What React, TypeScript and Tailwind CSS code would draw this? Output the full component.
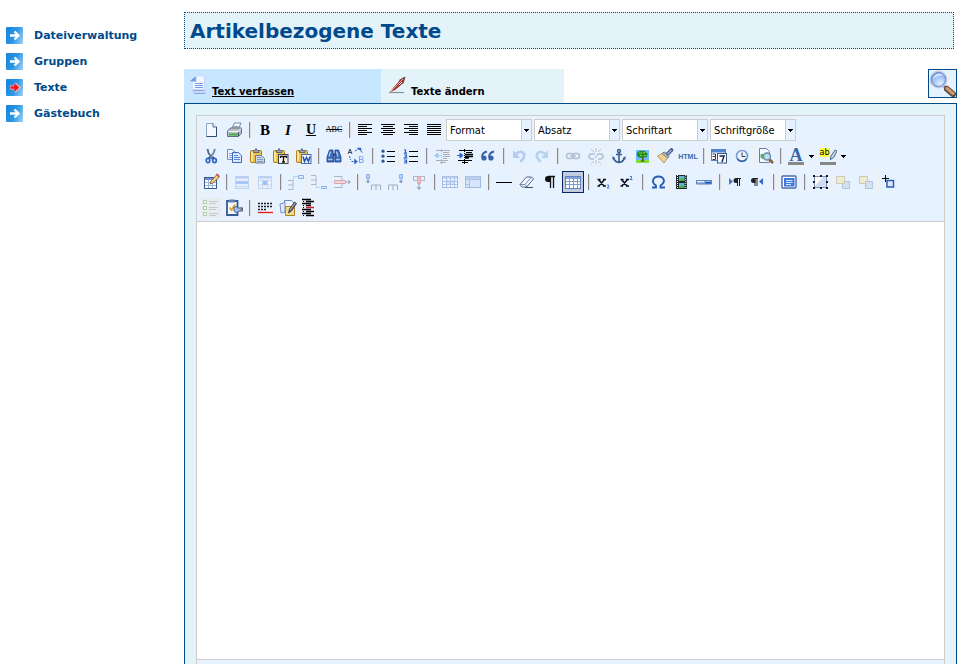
import React, { useState } from 'react';

const icons: Record<string, React.ReactNode> = {
  newdoc: (
    <>
      <path d="M5.500 3.500h6.500l3.500 3.500v9.500h-10z" fill="#f4f9ff" stroke="#8ea3c2" />
      <path d="M12 3.500v3.500h3.500" fill="#fff" stroke="#4a6690" />
      <path d="M15.500 7v9.500h-10" fill="none" stroke="#31486e" />
    </>
  ),
  print: (
    <>
      <path d="M7.500 9l3-6h6.500l-2.500 6z" fill="#f6f9ff" stroke="#7d8aa5" />
      <path d="M9.500 6.500h5M8.800 8h5" stroke="#8d9ab8" />
      <path d="M3.500 11l3-3h11v5l-3 3.500h-11z" fill="#b8bfcc" stroke="#626c80" />
      <path d="M4 11.500h10.500l2.500-3" fill="none" stroke="#f7f9fc" />
      <path d="M5 14.500h9" stroke="#3fb33f" strokeWidth="2" />
      <path d="M14.500 12v4" stroke="#4c5569" />
    </>
  ),
  left: <path d="M3 4.500h14M3 6.500h9M3 8.500h14M3 10.500h9M3 12.500h14M3 14.500h9" stroke="#000" />,
  center: <path d="M3 4.500h14M5 6.500h10M3 8.500h14M5 10.500h10M3 12.500h14M5 14.500h10" stroke="#000" />,
  right: <path d="M3 4.500h14M8 6.500h9M3 8.500h14M8 10.500h9M3 12.500h14M8 14.500h9" stroke="#000" />,
  full: <path d="M3 4.500h14M3 6.500h14M3 8.500h14M3 10.500h14M3 12.500h14M3 14.500h14" stroke="#000" />,
  cut: (
    <>
      <path d="M6.500 3l1 4 4 6" fill="none" stroke="#53657e" strokeWidth="1.800" />
      <path d="M14 3l-1.500 4-4 5.500" fill="none" stroke="#6f84a0" strokeWidth="1.800" />
      <path d="M9 11l-1.500 1.500M11.500 11l1.500 1.500" stroke="#2450a8" strokeWidth="2" />
      <ellipse cx="7" cy="14.500" rx="1.800" ry="2.200" fill="none" stroke="#2f66c4" strokeWidth="1.700" />
      <ellipse cx="13.500" cy="14.500" rx="1.800" ry="2.200" fill="none" stroke="#2f66c4" strokeWidth="1.700" />
    </>
  ),
  copy: (
    <>
      <path d="M3.500 3.500h5l3 3v7h-8z" fill="#eef5ff" stroke="#6b8dcc" />
      <path d="M5 7.500h4M5 9.500h4M5 11.500h3" stroke="#89aae0" />
      <path d="M8.500 6.500h6l3 3v7h-9z" fill="#dceaff" stroke="#3f68b8" />
      <path d="M10 9.500h4M10 11.500h6M10 13.500h6" stroke="#5d86d6" />
    </>
  ),
  paste: (
    <>
      <rect x="3.500" y="4.500" width="11" height="12" rx="1" fill="#f0c348" stroke="#b07f1c" />
      <path d="M5 6v9" stroke="#fbe69a" strokeWidth="2" />
      <path d="M6.500 6.500v-2h1.500l1-2 1 2h2v2z" fill="#9ba6b8" stroke="#5e687a" />
      <path d="M8.500 9.500h6l3 3v4.500h-9z" fill="#c9d6ea" stroke="#6c7c98" />
      <path d="M10 11.500h4M10 13.500h6M10 15.500h6" stroke="#8797b5" />
    </>
  ),
  pastetext: (
    <>
      <rect x="3.500" y="4.500" width="11" height="12" rx="1" fill="#f0c348" stroke="#b07f1c" />
      <path d="M5 6v9" stroke="#fbe69a" strokeWidth="2" />
      <path d="M6.500 6.500v-2h1.500l1-2 1 2h2v2z" fill="#9ba6b8" stroke="#5e687a" />
      <rect x="8.500" y="8.500" width="9.500" height="9" fill="#f2f2ee" stroke="#44464c" />
      <path d="M10.500 12v-1.500h6v1.500M13.500 10.500v5.500M12 16h3" fill="none" stroke="#111" strokeWidth="1.300" />
    </>
  ),
  pasteword: (
    <>
      <rect x="3.500" y="4.500" width="11" height="12" rx="1" fill="#f0c348" stroke="#b07f1c" />
      <path d="M5 6v9" stroke="#fbe69a" strokeWidth="2" />
      <path d="M6.500 6.500v-2h1.500l1-2 1 2h2v2z" fill="#9ba6b8" stroke="#5e687a" />
      <rect x="8.500" y="8.500" width="9.500" height="9" fill="#edf4ff" stroke="#4b6ba8" />
      <path d="M10 10.500l1.500 5 2-4 2 4 1.500-5" fill="none" stroke="#2456b8" strokeWidth="1.500" />
    </>
  ),
  search: (
    <>
      <path d="M5.500 4h3.500v3l1 1v8H3v-5zM11 4h3.500l2.500 7v5h-6V8z" fill="#3c69b8" stroke="#1e438a" strokeWidth="0.800" />
      <path d="M6.500 5.500l-1.500 5M12.500 5.500l1.500 5" stroke="#b9d2f5" strokeWidth="1.200" />
      <path d="M4 13.500h4.500M12 13.500h4" stroke="#9bbcf0" strokeWidth="1.500" />
      <path d="M9 8.500h3" stroke="#24498f" strokeWidth="2" />
    </>
  ),
  replace: (
    <>
      <path d="M1 8l2-5 2 5M2 6.500h2.500" fill="none" stroke="#3a4862" />
      <path d="M8 5l4-2M14 5l1.500 2M2.500 10l1 4M4.500 15.500h3" stroke="#2b62c8" strokeDasharray="2 1" />
      <path d="M10 2h4v3M7.500 13l3 2.500-3 2.500z" fill="#2b62c8" stroke="#2b62c8" strokeWidth="0.500" />
      <path d="M12.500 10.500v6h2.500q1.500-.3 1.500-1.600t-1.800-1.500q1.300-.2 1.300-1.500t-1.500-1.400zM12.500 13.500h2" fill="none" stroke="#7d9be8" />
    </>
  ),
  bullist: (
    <>
      <path d="M9 5.500h8M9 10.500h8M9 15.500h8" stroke="#000" />
      <circle cx="5" cy="5.200" r="1.600" fill="#33579c" />
      <circle cx="5" cy="10.200" r="1.600" fill="#33579c" />
      <circle cx="5" cy="15.200" r="1.600" fill="#33579c" />
    </>
  ),
  numlist: (
    <>
      <path d="M8 5.500h9M8 10.500h9M8 15.500h9" stroke="#000" />
      <path d="M3 4h1.500v3M3 7.200h3M3 9h2.500v1.300l-2 1.700h3M3 14h2.500v3h-2.500M3.500 15.500h2" fill="none" stroke="#2f61c0" strokeWidth="1.200" />
    </>
  ),
  outdent: (
    <>
      <path d="M4 4.500h14M11 6.500h6M11 8.500h7M11 10.500h7M11 12.500h4M4 14.500h12M8 16.500h6" stroke="#a7aeb8" />
      <path d="M9 9.500H3M6 7l-3.500 2.500 3.500 2.500z" fill="#a9c8f0" stroke="#a9c8f0" />
      <path d="M9.500 3v15" stroke="#b4bac4" strokeDasharray="1 1" />
    </>
  ),
  indent: (
    <>
      <path d="M4 4.500h14M11 6.500h6M3 14.500h14M7 16.500h6" stroke="#000" />
      <path d="M10 8.500h8M10 10.500h8M10 12h4" stroke="#000" strokeWidth="1.500" />
      <path d="M2 9.500h4M5 7l3 2.500-3 2.500z" fill="#2a62d0" stroke="#2a62d0" />
      <path d="M9.500 3v15" stroke="#000" strokeDasharray="1 1" />
    </>
  ),
  quote: (
    <>
      <path d="M9 5.500q-5 1-5 6" fill="none" stroke="#3b62a6" strokeWidth="1.800" />
      <circle cx="6" cy="12" r="2.600" fill="#3b62a6" />
      <path d="M16 5.500q-5 1-5 6" fill="none" stroke="#3b62a6" strokeWidth="1.800" />
      <circle cx="13" cy="12" r="2.600" fill="#3b62a6" />
    </>
  ),
  undo: (
    <>
      <path d="M7 8q3-3 6-2 3 1.500 2 5-1 3-4 4.500" fill="none" stroke="#b5cbf0" strokeWidth="2.600" />
      <path d="M4 4v8h7z" fill="#b5cbf0" />
    </>
  ),
  redo: (
    <>
      <path d="M13 8q-3-3-6-2-3 1.500-2 5 1 3 4 4.500" fill="none" stroke="#b7d4ee" strokeWidth="2.600" />
      <path d="M16 4v8H9z" fill="#b7d4ee" />
    </>
  ),
  link: (
    <>
      <rect x="3.500" y="7.500" width="7" height="5" rx="2.500" fill="none" stroke="#b4bfd0" strokeWidth="1.500" />
      <rect x="9.500" y="7.500" width="7" height="5" rx="2.500" fill="none" stroke="#b4bfd0" strokeWidth="1.500" />
      <path d="M7 10h6" stroke="#b4bfd0" strokeWidth="1.500" />
    </>
  ),
  unlink: (
    <>
      <path d="M8 13H5.500a2.500 2.500 0 010-5H9M12 13h2.500a2.500 2.500 0 000-5H12" fill="none" stroke="#b4bfd0" strokeWidth="1.700" />
      <path d="M10 2v4M5 3l3 3M15 3l-3 3M10 14v4M5 18l3-3M15 18l-3-3" stroke="#bbc3cf" />
      <path d="M9 12l3-4" stroke="#a4b4cf" />
    </>
  ),
  anchor: (
    <>
      <circle cx="10" cy="5" r="1.500" fill="none" stroke="#385b8e" strokeWidth="1.400" />
      <path d="M10 6v10M7 8.500h6M4.500 11.500q1 4.500 5.500 5 4.500-.5 5.500-5" fill="none" stroke="#385b8e" strokeWidth="1.600" />
      <path d="M3.500 13.500V10l3 2.500zM16.500 13.500V10l-3 2.500z" fill="#385b8e" />
    </>
  ),
  image: (
    <>
      <path d="M4 4h13v13H4z" fill="#6cb9ff" />
      <path d="M4 14h13v3H4z" fill="#7fe03c" />
      <path d="M10 10h1.500v4.500l2 1H8l2-1.500z" fill="#6b4220" />
      <path d="M5 9q-1-2 1-3 2-2 4-1 3-1 4 1.500 2.500 1 1 3.500 0 2-3 1.500-2 1.500-4 0Q5.500 12 5 9z" fill="#2c8a24" />
      <path d="M7 7h3M11 6.500h2M8 9.500h2M12 9.500h2" stroke="#70d145" />
    </>
  ),
  cleanup: (
    <>
      <path d="M12.500 8l4-4" stroke="#40527a" strokeWidth="3.600" strokeLinecap="round" />
      <path d="M12.500 8l4-4" stroke="#9cb8e8" strokeWidth="1.400" />
      <path d="M9.500 6l4.500 4.500-2 2-5-5z" fill="#aab5c4" stroke="#5e6e88" />
      <path d="M7 7.500l5 5-3 4.500-6.500-7z" fill="#f8e8b4" stroke="#b99344" />
      <path d="M4.500 10l5 5.500M6.500 9l4 5" stroke="#d4aa52" strokeWidth="0.800" />
    </>
  ),
  date: (
    <>
      <rect x="2.500" y="3.500" width="14" height="11" fill="#fff" stroke="#5b83c8" />
      <path d="M2 3h15v3.500H2z" fill="#5685d0" />
      <path d="M3.500 8h3v5.500h-3M3.500 10.500h3" fill="none" stroke="#2d3b55" />
      <rect x="8.500" y="7.500" width="9" height="9.500" fill="#f8fbff" stroke="#3d5788" />
      <path d="M10.500 10h4.500l-2 6" fill="none" stroke="#152340" strokeWidth="1.400" />
    </>
  ),
  time: (
    <>
      <circle cx="10" cy="10" r="5.500" fill="#eef5ff" stroke="#7898cf" strokeWidth="1.500" />
      <path d="M5.500 12.500a5 5 0 009 0" fill="none" stroke="#3862ae" strokeWidth="1.500" />
      <path d="M10 6.500v4h3.500" fill="none" stroke="#263c66" />
    </>
  ),
  preview: (
    <>
      <path d="M4.500 2.500h7l3 3v11h-10z" fill="#f4f8ff" stroke="#6c7e9c" />
      <path d="M5.500 8.500q3-2 4 1l-1 4-3-2z" fill="#5cae67" />
      <path d="M14 13l4 4" stroke="#8d6238" strokeWidth="2.600" />
      <circle cx="12" cy="10.500" r="3.500" fill="#b9def3" stroke="#6785a8" strokeWidth="1.300" />
    </>
  ),
  tableedit: (
    <>
      <rect x="3.500" y="5.500" width="12" height="11" fill="#fff" stroke="#39598f" />
      <path d="M4 7h11" stroke="#6c93d1" strokeWidth="2" />
      <path d="M4 10.500h11M4 13.500h11M7.500 8v8M11.500 8v8" stroke="#9db8de" />
      <path d="M9 12l1-3 6-6.500 2.500 2.500-6.500 6z" fill="#f1cf7e" stroke="#7a4f29" strokeWidth="0.800" />
      <path d="M15.500 2l2.500 2.500" stroke="#d8584a" strokeWidth="1.800" />
    </>
  ),
  rowprops: (
    <>
      <rect x="3.500" y="4.500" width="13" height="12" fill="#e4efff" stroke="#c3d3ec" />
      <path d="M4 5.500h12" stroke="#b5cdf4" strokeWidth="2" />
      <path d="M4 9h12v3H4z" fill="#a9c8f8" />
      <path d="M4 14.500h12" stroke="#c9d9f0" />
    </>
  ),
  cellprops: (
    <>
      <rect x="3.500" y="4.500" width="13" height="12" fill="#eef4fd" stroke="#c3d3ec" />
      <path d="M4 5.500h12" stroke="#b5cff6" strokeWidth="2" />
      <path d="M4 13h12M7.500 7v9M12.500 7v9M4 8.500h12" stroke="#c8d8ef" />
      <path d="M8 9h4v4H8z" fill="#97bff9" />
    </>
  ),
  rowbefore: (
    <>
      <path d="M2 8.500h5v9H2M2 13h5" fill="none" stroke="#b2b7be" />
      <path d="M7.500 7.500v-3h4" fill="none" stroke="#9badc9" strokeDasharray="1 1" />
      <path d="M12.500 3.500h5v3h-5z" fill="#dceaff" stroke="#8eb0e4" />
    </>
  ),
  rowafter: (
    <>
      <path d="M2 3.500h5v9H2M2 8h5" fill="none" stroke="#b2b7be" />
      <path d="M7.500 13.500v2h4" fill="none" stroke="#9badc9" strokeDasharray="1 1" />
      <path d="M12.500 14.500h5v2h-5z" fill="#dceaff" stroke="#8eb0e4" />
    </>
  ),
  rowdelete: (
    <>
      <path d="M2 4.500h8v11H2" fill="none" stroke="#b2b7be" />
      <path d="M2.500 8.500h11v3h-11z" fill="#f3d3d8" stroke="#d7a8b0" />
      <path d="M14 10h4M16 8l2.500 2-2.500 2" fill="none" stroke="#9ca6b4" />
    </>
  ),
  colbefore: (
    <>
      <path d="M3.500 2.500h3v4h-3z" fill="#b9d3fb" stroke="#8eb0e4" />
      <path d="M5 7v3M3.500 9l1.500 2 1.500-2z" fill="#8d9fb9" stroke="#8d9fb9" />
      <path d="M8.500 18v-5h9v5M13 13v5" fill="none" stroke="#a8adb5" />
    </>
  ),
  colafter: (
    <>
      <path d="M13.500 2.500h3v4h-3z" fill="#b9d3fb" stroke="#8eb0e4" />
      <path d="M15 7v3M13.500 9l1.500 2 1.500-2z" fill="#8d9fb9" stroke="#8d9fb9" />
      <path d="M2.500 18v-5h9v5M7 13v5" fill="none" stroke="#a8adb5" />
    </>
  ),
  coldelete: (
    <>
      <path d="M4.500 4v4.500h4M15.500 4v4.500h-4M4 4.500h12" fill="none" stroke="#b2b7be" />
      <path d="M8.500 4.500h3v7h-3z" fill="#f3bcc3" stroke="#d7a8b0" />
      <path d="M10 12v5M8 15l2 2.500 2-2.500" fill="none" stroke="#8d95a2" />
    </>
  ),
  split: (
    <>
      <rect x="2.500" y="4.500" width="15" height="11" fill="#f1f6fe" stroke="#a3bbe0" />
      <path d="M3 5.500h14" stroke="#b8cdee" strokeWidth="2" />
      <path d="M3 9.500h14M3 12.500h14M6.500 5v10M10.500 5v10M14.500 5v10" stroke="#a9c2e8" />
      <path d="M7 8h7v5H7z" fill="#a9c8f4" opacity=".5" />
    </>
  ),
  merge: (
    <>
      <rect x="2.500" y="4.500" width="15" height="11" fill="#d6e5fb" stroke="#a3bbe0" />
      <path d="M3 5.500h14" stroke="#b8cdee" strokeWidth="2" />
      <path d="M3 7.500h14M6.500 5v10M10.500 5v2M14.500 5v2M3 12.500h3" stroke="#a9c2e8" />
    </>
  ),
  hr: <path d="M2 10.500h16" stroke="#000" />,
  eraser: (
    <>
      <path d="M3 12.500l6.500-7.500h5l2 2-7 8H5z" fill="#f6f9ff" stroke="#52678f" />
      <path d="M3 12.500h5l6.500-7.500M8 12.500l2 2.500" fill="none" stroke="#7188b0" />
      <path d="M8 15.500h8" stroke="#3d4d68" />
    </>
  ),
  pilcrow: (
    <>
      <path d="M10.500 4v12M13.500 4v12M8 4.500h7" stroke="#111" strokeWidth="1.300" />
      <path d="M11 4H8a3 3 0 000 6h3z" fill="#111" />
    </>
  ),
  guides: (
    <>
      <rect x="2.500" y="4.500" width="15" height="12" fill="#fff" stroke="#6083bd" />
      <path d="M3 6h14" stroke="#86a5dc" strokeWidth="2" />
      <path d="M3 9.500h14M3 12.500h14M6.500 5v11M10.500 5v11M14.500 5v11" stroke="#7d9ccc" />
    </>
  ),
  sub: (
    <>
      <path d="M4.500 7.500l6 7M10.500 7.500l-6 7M3.500 7.500h3M9 7.500h3M3.500 14h2.500M9 14h3" stroke="#111" strokeWidth="1.600" />
      <path d="M13 13h1.500v1.500l-1.500 1.500h2.500" fill="none" stroke="#3978d0" />
    </>
  ),
  sup: (
    <>
      <path d="M4.500 7.500l6 7M10.500 7.500l-6 7M3.500 7.500h3M9 7.500h3M3.500 14h2.500M9 14h3" stroke="#111" strokeWidth="1.600" />
      <path d="M13 4.500h1.500v1.500l-1.500 1.500h2.500" fill="none" stroke="#3978d0" />
    </>
  ),
  omega: (
    <path d="M4 15.500h4v-2q-3.500-2-3-5 .8-4 5.500-4t5.500 4q0 3-3.500 5v2H17" fill="none" stroke="#2859b4" strokeWidth="1.800" />
  ),
  media: (
    <>
      <path d="M5 3h11v14H5z" fill="#222a2c" />
      <path d="M8 4h5.500v5H8zM8 11h5.500v5H8z" fill="#5fb6c4" />
      <path d="M8 9l3-3 2.500 3zM8 16l3-3 2.500 3z" fill="#4cad38" />
      <path d="M6.500 3v14M14.800 3v14" stroke="#fff" strokeDasharray="1 1" />
    </>
  ),
  advhr: (
    <>
      <path d="M2.500 8.500h15v3.500h-15z" fill="#8fb4ed" stroke="#5d7fb8" />
      <path d="M3 9.500h7" stroke="#eff6ff" />
      <path d="M11 10h6v1.500h-6z" fill="#1c55bb" />
    </>
  ),
  ltr: (
    <>
      <path d="M4 6v7l4-3.500z" fill="#4d75b8" />
      <path d="M12.500 6v8M14.500 6v8M11 6.500h5" stroke="#222" />
      <path d="M13 6h-2a2.300 2.300 0 000 5h2z" fill="#222" />
    </>
  ),
  rtl: (
    <>
      <path d="M15 6v7l-4-3.500z" fill="#3267c8" />
      <path d="M7 6v8M9 6v8M5 6.500h5" stroke="#222" />
      <path d="M7.500 6h-2a2.300 2.300 0 000 5h2z" fill="#222" />
    </>
  ),
  fullscreen: (
    <>
      <rect x="3" y="4" width="14" height="12" rx="1" fill="#fff" stroke="#4a6cab" strokeWidth="1.400" />
      <path d="M5 6h10.500v8.500H5z" fill="#3e78dc" />
      <path d="M7 8.500h6.500M7 10.500h6.500M7 12.500h5" stroke="#dbe9ff" />
    </>
  ),
  layer: (
    <>
      <rect x="4.500" y="4.500" width="12" height="11" fill="#cfdcf1" stroke="#7e8da8" />
      <path d="M5 5h8l-8 9z" fill="#fff" />
      <path d="M3 3h2v2H3zM10 3h2v2h-2zM16 3h2v2h-2zM3 9h2v2H3zM16 9h2v2h-2zM3 15h2v2H3zM10 15h2v2h-2zM16 15h2v2h-2z" fill="#111827" />
    </>
  ),
  forward: (
    <>
      <path d="M9.500 9.500h7v7h-7z" fill="#d4e1ee" stroke="#b6c5d5" />
      <path d="M3.500 4.500h8v7h-8z" fill="#f0eccb" stroke="#c9ccb4" />
    </>
  ),
  backward: (
    <>
      <path d="M3.500 4.500h8v7h-8z" fill="#f0eccb" stroke="#c9ccb4" />
      <path d="M9.500 9.500h7v7h-7z" fill="#d4e1ee" stroke="#b6c5d5" />
    </>
  ),
  absolute: (
    <>
      <path d="M6.500 3v7M3 6.500h7" stroke="#111" />
      <path d="M8 8.500h6.500V15H8z" fill="#dbe8fd" stroke="#2d5cba" strokeWidth="1.500" />
    </>
  ),
  styleprops: (
    <>
      <path d="M0 0h20v20H0z" fill="#e6edf0" />
      <path d="M2.500 2.500h3v3h-3zM2.500 8.500h3v3h-3zM2.500 14.500h3v3h-3z" fill="#f5faf3" stroke="#a9c8ae" />
      <path d="M8 3.500h9M8 5.500h7M8 9.500h9M8 11.500h7M8 15.500h9M8 17.500h7" stroke="#c3c9cd" />
    </>
  ),
  attribs: (
    <>
      <path d="M3 3h10.500v14H3z" fill="#f7fbff" stroke="#385b91" strokeWidth="1.800" />
      <path d="M5 1.500h6v3H5z" fill="#5b7fb4" />
      <path d="M5.500 9.500l2 2.500 3.500-5.500" fill="none" stroke="#dfa02d" strokeWidth="1.800" />
      <path d="M10 9.500l3.500-1.500v2h5v3h-4l-2 2-2.500-2z" fill="#a9c4e8" stroke="#395a91" />
      <path d="M17.500 9v4" stroke="#a56a35" strokeWidth="1.600" />
    </>
  ),
  pagebreak: (
    <>
      <path d="M3 5.500h15M3 8.500h15M3 11.500h8" stroke="#222" strokeWidth="1.600" strokeDasharray="2 1" />
      <path d="M3 14.500h15" stroke="#f01414" strokeWidth="1.300" />
    </>
  ),
  template: (
    <>
      <path d="M6.500 2.500h7l2 2v9h-9z" fill="#eef4ff" stroke="#6a89c4" />
      <path d="M2 6l5-1.500v9.500l-4 1z" fill="#dfe9fb" stroke="#7591c5" />
      <path d="M7.500 8.500h9v9h-9z" fill="#f3dc8e" stroke="#ab7d29" />
      <path d="M10.500 15l1-4 5-7 2 1.500-5 7.500z" fill="#5a5f6b" stroke="#2a2e38" strokeWidth="0.700" />
      <path d="M12 12l5-7" stroke="#d7dde8" strokeWidth="0.700" />
    </>
  ),
  linespace: (
    <>
      <path d="M1 1.500h9M5 3.500h8M1 5.500h9M5 7.500h5M1 11.500h9M5 13.500h8M1 15.500h9M5 17.500h8" stroke="#000" strokeWidth="1.400" />
      <path d="M5 9.500h8" stroke="#d81e2c" strokeWidth="1.600" />
      <path d="M2.500 1v18" stroke="#000" strokeDasharray="1 1" />
    </>
  ),
};

const glyphs: Record<string, React.ReactNode> = {
  bold: <span className="font-['Liberation_Serif',serif] text-[15px] font-bold">B</span>,
  italic: <span className="font-['Liberation_Serif',serif] text-[15px] font-bold italic">I</span>,
  underline: <span className="font-['Liberation_Serif',serif] text-[14px] font-bold underline">U</span>,
  strike: <span className="font-['Liberation_Serif',serif] text-[8px] font-normal line-through">ABC</span>,
  html: <span className="font-['Liberation_Sans',sans-serif] text-[7px] font-bold text-[#3f68ae]">HTML</span>,
  forecolor: (
    <span className="flex flex-col items-center">
      <span className="h-[14px] font-['Liberation_Serif',serif] text-[18px] font-bold leading-[15px] text-[#3d62a5]">A</span>
      <span className="h-[3px] w-4 bg-[#888]" />
    </span>
  ),
  backcolor: (
    <span className="flex flex-col items-center">
      <span className="flex h-[14px] items-start">
        <span className="h-[9px] bg-[#ffff3c] font-['DejaVu_Sans_Condensed','DejaVu_Sans',sans-serif] text-[9px] font-normal leading-[8px]">ab</span>
        <svg width="7" height="14" viewBox="0 0 7 14">
          <path d="M0 12l1-4 4-6 2 1-3 6z" fill="#c3d5ee" stroke="#536988" />
        </svg>
      </span>
      <span className="h-[3px] w-4 bg-[#888]" />
    </span>
  ),
};

// "|" marks a separator, "icon!" a disabled button
const rows: [string, string][][] = [
  [
    ['newdoc', 'Neues Dokument'], ['print', 'Drucken'], ['|', ''],
    ['bold', 'Fett'], ['italic', 'Kursiv'], ['underline', 'Unterstrichen'], ['strike', 'Durchgestrichen'], ['|', ''],
    ['left', 'Linksbündig'], ['center', 'Zentriert'], ['right', 'Rechtsbündig'], ['full', 'Blocksatz'],
  ],
  [
    ['cut', 'Ausschneiden'], ['copy', 'Kopieren'], ['paste', 'Einfügen'], ['pastetext', 'Als Text einfügen'], ['pasteword', 'Aus Word einfügen'], ['|', ''],
    ['search', 'Suchen'], ['replace', 'Ersetzen'], ['|', ''],
    ['bullist', 'Aufzählung'], ['numlist', 'Nummerierung'], ['|', ''],
    ['outdent!', 'Ausrücken'], ['indent', 'Einrücken'], ['quote', 'Zitat'], ['|', ''],
    ['undo!', 'Rückgängig'], ['redo!', 'Wiederholen'], ['|', ''],
    ['link!', 'Link einfügen'], ['unlink!', 'Link entfernen'], ['anchor', 'Anker'], ['image', 'Bild'], ['cleanup', 'Code aufräumen'], ['html', 'HTML bearbeiten'], ['|', ''],
    ['date', 'Datum'], ['time', 'Uhrzeit'], ['preview', 'Vorschau'], ['|', ''],
    ['forecolor', 'Textfarbe'], ['backcolor', 'Hintergrundfarbe'],
  ],
  [
    ['tableedit', 'Tabelle'], ['|', ''],
    ['rowprops!', 'Zeileneigenschaften'], ['cellprops!', 'Zelleneigenschaften'], ['|', ''],
    ['rowbefore!', 'Zeile davor'], ['rowafter!', 'Zeile danach'], ['rowdelete!', 'Zeile löschen'], ['|', ''],
    ['colbefore!', 'Spalte davor'], ['colafter!', 'Spalte danach'], ['coldelete!', 'Spalte löschen'], ['|', ''],
    ['split!', 'Zellen trennen'], ['merge!', 'Zellen verbinden'], ['|', ''],
    ['hr', 'Trennlinie'], ['eraser', 'Formatierung entfernen'], ['pilcrow', 'Steuerzeichen'], ['guides', 'Hilfslinien'], ['|', ''],
    ['sub', 'Tiefgestellt'], ['sup', 'Hochgestellt'], ['|', ''],
    ['omega', 'Sonderzeichen'], ['media', 'Medien'], ['advhr', 'Horizontale Linie'], ['|', ''],
    ['ltr', 'Links nach rechts'], ['rtl', 'Rechts nach links'], ['|', ''],
    ['fullscreen', 'Vollbild'], ['|', ''],
    ['layer', 'Ebene einfügen'], ['forward!', 'Nach vorne'], ['backward!', 'Nach hinten'], ['absolute', 'Absolute Position'],
  ],
  [
    ['styleprops!', 'CSS bearbeiten'], ['attribs', 'Attribute'], ['|', ''],
    ['pagebreak', 'Seitenumbruch'], ['template', 'Vorlage'], ['linespace', 'Zeilenabstand'],
  ],
];

const menu = ['Dateiverwaltung', 'Gruppen', 'Texte', 'Gästebuch'];
const selects = ['Format', 'Absatz', 'Schriftart', 'Schriftgröße'];

const ToolButton = ({ id, label, pressed, onClick }: { id: string; label: string; pressed: boolean; onClick?: () => void }) => {
  const name = id.replace('!', '');
  return (
    <button
      type="button"
      aria-label={label}
      disabled={id.endsWith('!')}
      onClick={onClick}
      className={`flex size-[22px] shrink-0 items-center justify-center border leading-none text-black ${
        pressed ? 'border-[#0a246a] bg-[#c2cbe0]' : 'border-[#edf0f4]'
      }`}
    >
      {glyphs[name] || (
        <svg width="20" height="20" viewBox="0 0 20 20" className="shrink-0">
          {icons[name]}
        </svg>
      )}
    </button>
  );
};

const Arrow = () => (
  <svg width="5" height="3" viewBox="0 0 5 3" shapeRendering="crispEdges">
    <path d="M0 0h5v1H0zM1 1h3v1H1zM2 2h1v1H2z" fill="#000" />
  </svg>
);

const NavIcon = ({ active }: { active: boolean }) => (
  <svg width="17" height="17" viewBox="0 0 17 17" className="shrink-0">
    <defs>
      <linearGradient id="nav" x1="0" y1="0.300" x2="1" y2="0.700">
        <stop offset="0" stopColor="#1787dc" />
        <stop offset="0.550" stopColor="#2f97e4" />
        <stop offset="1" stopColor="#8fc9f3" />
      </linearGradient>
    </defs>
    <rect width="17" height="17" rx="1" fill="url(#nav)" />
    {active && <path d="M4 8.500h8M8.500 5l3.500 3.500-3.500 3.500" fill="none" stroke="#f3b9c8" strokeWidth="4" />}
    <path
      d={active ? 'M4.500 8.500h7M8.500 5.500l3 3-3 3' : 'M4 8.500h8M8.500 4.500l4 4-4 4'}
      fill="none"
      stroke={active ? '#f01818' : '#fff'}
      strokeWidth="2.400"
    />
  </svg>
);

const App: React.FC = () => {
  const [tab, setTab] = useState('verfassen');
  const [guides, setGuides] = useState(true);
  const [text, setText] = useState('');

  return (
    <div className="flex min-h-screen bg-white font-['DejaVu_Sans',Verdana,sans-serif] text-[11px] font-bold">
      <nav className="w-[184px] shrink-0 pl-[6px] pt-[27px]">
        <ul className="flex flex-col gap-[9px]">
          {menu.map((item) => (
            <li key={item}>
              <a href="#" className="flex h-[17px] items-center gap-[11px] text-[#004a8c]">
                <NavIcon active={item === 'Texte'} />
                <span className="pt-[2px]">{item}</span>
              </a>
            </li>
          ))}
        </ul>
      </nav>

      <main className="flex min-w-0 flex-1 flex-col pr-1 pt-3">
        <h1 className="mr-[3px] border border-dotted border-[#004a8c] bg-[#e4f3fa] px-[5px] pt-[2px] text-[20px] leading-[33px] text-[#004a8c]">
          Artikelbezogene Texte
        </h1>

        <div className="mt-5 flex items-start text-[10px]">
          <a
            href="#verfassen"
            onClick={() => setTab('verfassen')}
            className={`flex h-[34px] w-[197px] items-end gap-1 bg-[#c7e6ff] pb-[3px] pl-[6px] leading-4 text-black ${tab === 'verfassen' ? 'underline' : ''}`}
          >
            <svg width="18" height="20" viewBox="0 0 18 20" className="mb-[5px]">
              <path d="M5 1h10v16H3V8z" fill="#f1f6ff" />
              <path d="M0 6l6-5v6H3z" fill="#6f97ea" />
              <path d="M1 6.500h5V1.500" fill="none" stroke="#a9c3f6" />
              <path d="M7 1.500h8" stroke="#dfe9fd" />
              <path d="M14.500 1v14" stroke="#c5d4f7" />
              <path d="M5 8.500h8M5 10.500h8M5 12.500h8" stroke="#7a98e6" />
              <path d="M2 14h14v3q0 2-2 2H3z" fill="#c9d7f8" />
              <path d="M3 15.500h11M4 18.500h11" stroke="#8aa4e8" />
            </svg>
            Text verfassen
          </a>
          <a
            href="#aendern"
            onClick={() => setTab('aendern')}
            className={`flex h-[34px] w-[183px] items-end gap-1 bg-[#e4f3fa] pb-[3px] pl-2 leading-4 text-black ${tab === 'aendern' ? 'underline' : ''}`}
          >
            <svg width="18" height="20" viewBox="0 0 18 20" className="mb-[5px]">
              <path d="M0 17.500h15" stroke="#8b8f96" strokeWidth="1.200" />
              <path d="M1 17l3-4 7-8 5-3-1 5-4 4-5 4z" fill="#a8352d" />
              <path d="M2 16l5-5 7-7" stroke="#e4a99c" />
              <path d="M10 5.500l6-3.500-2.500 7" fill="none" stroke="#6b4a42" />
              <path d="M10 10l3-3" stroke="#fff" />
            </svg>
            Texte ändern
          </a>
          <button type="button" aria-label="Suche" className="ml-auto flex size-[29px] items-center justify-center border border-[#004a8c] bg-[#e6f2ff]">
            <svg width="27" height="27" viewBox="0 0 27 27">
              <defs>
                <radialGradient id="lens" cx="0.600" cy="0.750" r="0.800">
                  <stop offset="0" stopColor="#e3f1ff" />
                  <stop offset="0.500" stopColor="#a5c5fa" />
                  <stop offset="1" stopColor="#6d94e8" />
                </radialGradient>
              </defs>
              <path d="M14 15l3 3" stroke="#777d8b" strokeWidth="3" />
              <path d="M18 19l6 5" stroke="#5e4334" strokeWidth="6" strokeLinecap="round" />
              <path d="M18 18.500l6 5" stroke="#c39a77" strokeWidth="3.500" strokeLinecap="round" />
              <circle cx="9.500" cy="9.500" r="8" fill="url(#lens)" stroke="#c2cbe0" strokeWidth="2" />
              <circle cx="9.500" cy="9.500" r="7" fill="none" stroke="#6484cf" />
              <path d="M4 9q1-5 6-5.500 3 0 4.500 2Q8 5 4 9z" fill="#f3f8ff" opacity=".7" />
            </svg>
          </button>
        </div>

        <section className="flex flex-1 flex-col border border-b-0 border-[#004a8c] bg-[#e4f3fa] px-[11px] pt-[11px]">
          <div className="flex flex-1 flex-col border border-b-0 border-[#ccc] bg-[#e6f2ff]">
            <div role="toolbar" className="flex flex-col gap-1 border-b border-[#ccc] px-[3px] pb-[2px] pt-[3px]">
              {rows.map((row, i) => (
                <div key={i} className="flex items-center gap-px">
                  {row.map(([id, label], j) =>
                    id === '|' ? (
                      <span key={j} className="ml-[3px] mr-px flex h-[22px] w-[3px] items-center">
                        <span className="h-4 w-px bg-[#8f8686]" />
                        <span className="h-4 w-px bg-[#dcdcdc]" />
                      </span>
                    ) : id === 'forecolor' || id === 'backcolor' ? (
                      <span key={j} className="flex">
                        <ToolButton id={id} label={label} pressed={false} />
                        <button type="button" aria-label={label + ' wählen'} className="flex h-[22px] w-[9px] items-center justify-center border-y border-r border-[#edf0f4]">
                          <Arrow />
                        </button>
                      </span>
                    ) : (
                      <ToolButton
                        key={j}
                        id={id}
                        label={label}
                        pressed={id === 'guides' && guides}
                        onClick={id === 'guides' ? () => setGuides(!guides) : undefined}
                      />
                    )
                  )}
                  {i === 0 &&
                    selects.map((name) => (
                      <span key={name} className="relative mr-px flex">
                        <select
                          aria-label={name}
                          className="h-[22px] w-[86px] appearance-none rounded-none border border-[#ccc] bg-white pl-[3px] pt-[2px] font-['DejaVu_Sans_Condensed','DejaVu_Sans',sans-serif] text-[11px] font-normal text-black"
                        >
                          <option>{name}</option>
                        </select>
                        <span className="pointer-events-none absolute inset-y-px right-px flex w-[10px] items-center justify-center border-l border-[#ccc] bg-[#e6f2ff]">
                          <Arrow />
                        </span>
                      </span>
                    ))}
                </div>
              ))}
            </div>
            <textarea
              aria-label="Text"
              value={text}
              onChange={(e) => setText(e.target.value)}
              className="w-full flex-1 resize-none bg-white p-2 font-normal outline-none"
            />
            <div className="h-[5px] border-t border-[#ccc]" />
          </div>
        </section>
      </main>
    </div>
  );
};

export default App;
